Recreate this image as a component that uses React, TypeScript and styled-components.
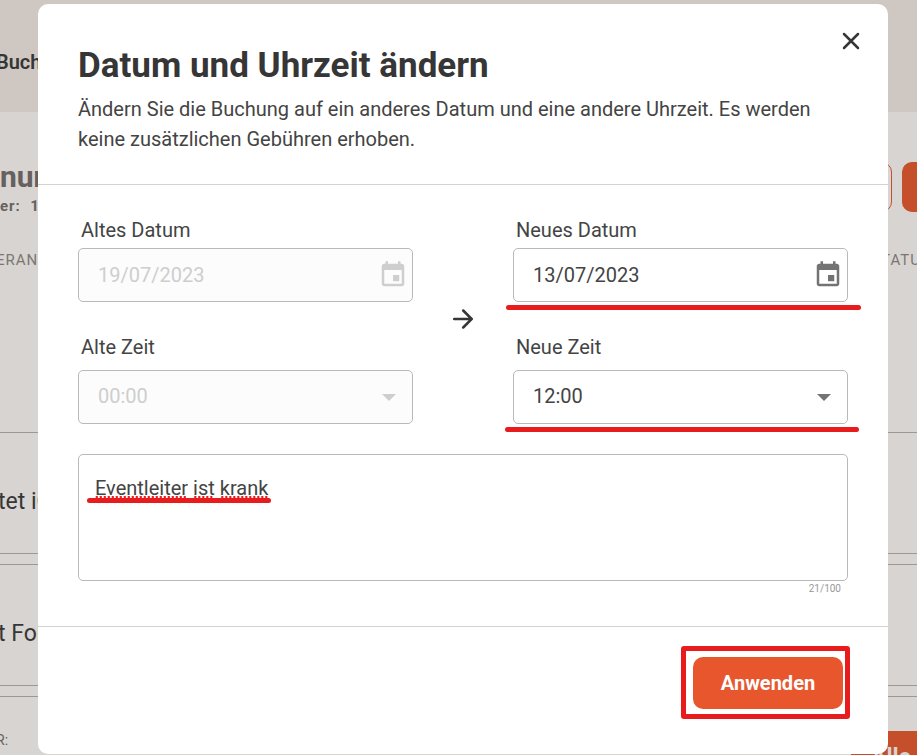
import React, { useState } from 'react';
import styled, { createGlobalStyle, css } from 'styled-components';

const GlobalStyle = createGlobalStyle`
  *, *::before, *::after { box-sizing: border-box; }
  body {
    margin: 0;
    overflow: hidden;
    background: #d8d4d1;
    color: #363636;
    font-family: Roboto, "Liberation Sans", sans-serif;
    font-size: 20px;
  }
  button, input, select, textarea { font: inherit; color: inherit; }
`;

const Page = styled.div`
  height: 100vh;
  overflow: hidden;
`;

const PageHeader = styled.header`
  height: 112px;
  padding-top: 50px;
  background: #cfc7c1;
  font-weight: 600;
  line-height: 24px;
`;

const Clipped = styled.div`
  margin-left: -4px;
`;

const TitleRow = styled.div`
  display: flex;
  justify-content: space-between;
  height: 100px;
  padding-top: 50px;
`;

const PageTitle = styled.h2`
  margin: 0;
  color: #66615e;
  font-size: 30px;
  font-weight: 700;
  line-height: 30px;
`;

const PageSubtitle = styled.p`
  margin: 0;
  padding-top: 2px;
  color: #66615e;
  font-size: 15px;
  font-weight: 700;
  letter-spacing: 1px;
  line-height: 24px;
  white-space: pre;
`;

const PageActions = styled.div`
  display: flex;
  gap: 10px;
`;

const PageButton = styled.button<{ $filled?: boolean }>`
  width: ${(p) => (p.$filled ? 15 : 60)}px;
  height: 50px;
  padding: 0;
  border: 1px solid #c44f2a;
  border-right-width: ${(p) => (p.$filled ? 0 : 1)}px;
  border-radius: ${(p) => (p.$filled ? '10px 0 0 10px' : '10px')};
  background: ${(p) => (p.$filled ? '#c44f2a' : 'transparent')};
`;

const Columns = styled.div`
  display: flex;
  justify-content: space-between;
  height: 220px;
  margin: 0 -4px;
  padding-top: 36px;
  color: #7b7673;
  font-size: 15px;
  letter-spacing: 1px;
  line-height: 24px;
`;

const BookingList = styled.div`
  display: grid;
  gap: 10px;
`;

const Booking = styled.div`
  display: flex;
  justify-content: space-between;
  height: 122px;
  margin-left: -2px;
  padding-top: 56px;
  border: solid #9d9894;
  border-width: 1px 0;
  font-size: 23px;
  line-height: 26px;
`;

const BookingMeta = styled.span`
  margin-top: -26px;
  margin-left: -2px;
  color: #66615e;
  font-size: 14px;
`;

const AllButton = styled.button`
  width: 66px;
  height: 50px;
  margin-top: -22px;
  padding: 4px 6px 0;
  border: 0;
  background: #c44f2a;
  color: #d8d4d1;
  font-weight: 700;
  text-align: right;
`;

const Overlay = styled.div`
  position: fixed;
  inset: 0;
  padding: 4px 29px 1px 38px;
`;

const Dialog = styled.form`
  position: relative;
  border-radius: 10px;
  background: #fff;
`;

const DialogHeader = styled.header`
  padding: 40px 40px 30px;
  border-bottom: 1px solid #d3d3d3;
`;

const DialogTitle = styled.h1`
  margin: 0 0 6px;
  font-size: 35px;
  font-weight: 700;
  line-height: 44px;
`;

const Description = styled.p`
  margin: 0;
  color: #444;
  line-height: 30px;
`;

const CloseButton = styled.button`
  position: absolute;
  top: 21px;
  right: 21px;
  display: grid;
  place-items: center;
  width: 32px;
  height: 32px;
  padding: 0;
  border: 0;
  background: none;
`;

const DialogBody = styled.div`
  padding: 33px 40px 30px;
  border-bottom: 1px solid #d3d3d3;
`;

const Change = styled.div`
  display: grid;
  grid-template-columns: 1fr 100px 1fr;
  align-items: center;
  margin-bottom: 30px;
`;

const ChangeArrow = styled.svg`
  justify-self: center;
  margin-bottom: 4px;
`;

const FieldGroup = styled.div`
  display: grid;
  gap: 33px;
`;

const Field = styled.div<{ $gap: number }>`
  display: grid;
  gap: ${(p) => p.$gap}px;
`;

const Label = styled.label`
  padding-left: 3px;
  color: #444;
  line-height: 24px;
`;

const Control = styled.div`
  position: relative;
`;

const box = css`
  display: block;
  width: 100%;
  border: 1px solid #b9b9b9;
  border-radius: 5px;
  background: #fff;
  color: #444;
  outline: none;
`;

const single = css`
  ${box}
  height: 54px;
  padding: 0 50px 0 19px;
  &:disabled {
    background: #fcfcfc;
    color: #cecece;
    opacity: 1;
  }
`;

const TextInput = styled.input`
  ${single}
`;

const Select = styled.select`
  ${single}
  appearance: none;
  padding-bottom: 2px;
`;

const CalendarButton = styled.button`
  position: absolute;
  top: 12px;
  right: 5px;
  width: 30px;
  height: 30px;
  padding: 0;
  border: 0;
  background: none;
  color: #737373;
  &:disabled { color: #cecece; }
`;

const Caret = styled.svg<{ $muted?: boolean }>`
  position: absolute;
  top: 24px;
  right: 17px;
  fill: ${(p) => (p.$muted ? '#cecece' : '#737373')};
  pointer-events: none;
`;

const Marker = styled.span<{ $shift?: boolean }>`
  position: absolute;
  right: ${(p) => (p.$shift ? -11 : -13)}px;
  bottom: -8px;
  left: ${(p) => (p.$shift ? -8 : -7)}px;
  height: 5px;
  border-radius: 3px;
  background: #e81c1c;
`;

const Reason = styled.textarea`
  ${box}
  height: 127px;
  padding: 18px 16px;
  line-height: 30px;
  resize: none;
`;

const ReasonMarks = styled.svg`
  position: absolute;
  top: 40px;
  left: 8px;
  pointer-events: none;
`;

const Counter = styled.div`
  padding-right: 7px;
  color: #999;
  font-size: 10px;
  line-height: 15px;
  text-align: right;
`;

const DialogFooter = styled.footer`
  display: flex;
  justify-content: flex-end;
  padding: 30px 45px 45px;
`;

const SubmitFrame = styled.div`
  position: relative;
  &::after {
    content: "";
    position: absolute;
    inset: -11px -7px -10px -12px;
    border: 5px solid #e81c1c;
    border-radius: 3px;
    pointer-events: none;
  }
`;

const SubmitButton = styled.button`
  width: 150px;
  height: 52px;
  padding: 0;
  border: 0;
  border-radius: 10px;
  background: #e8562e;
  color: #fff;
  font-weight: 700;
`;

function DateField({ id, label, initial, disabled }: { id: string; label: string; initial: string; disabled?: boolean }) {
  const [value, setValue] = useState(initial);
  return (
    <Field $gap={6}>
      <Label htmlFor={id}>{label}</Label>
      <Control>
        <TextInput id={id} value={value} disabled={disabled} onChange={(e) => setValue(e.target.value)} />
        <CalendarButton type="button" disabled={disabled} aria-label={label}>
          <svg width="30" height="30" viewBox="0 0 24 24" fill="currentColor" display="block">
            <path d="M17 12h-5v5h5v-5zM16 1v2H8V1H6v2H5c-1.11 0-1.99.9-1.99 2L3 19c0 1.1.89 2 2 2h14c1.1 0 2-.9 2-2V5c0-1.1-.9-2-2-2h-1V1h-2zm3 18H5V8h14v11z" />
          </svg>
        </CalendarButton>
        {!disabled && <Marker />}
      </Control>
    </Field>
  );
}

function TimeField({ id, label, value, disabled }: { id: string; label: string; value: string; disabled?: boolean }) {
  return (
    <Field $gap={11}>
      <Label htmlFor={id}>{label}</Label>
      <Control>
        <Select id={id} defaultValue={value} disabled={disabled}>
          <option>{value}</option>
        </Select>
        <Caret width="14" height="7" viewBox="0 0 14 7" $muted={disabled}>
          <path d="M0 0h14L7 7z" />
        </Caret>
        {!disabled && <Marker $shift />}
      </Control>
    </Field>
  );
}

export default function App() {
  const [reason, setReason] = useState('Eventleiter ist krank');
  return (
    <>
      <GlobalStyle />
      <Page>
        <PageHeader>
          <Clipped>Buch</Clipped>
        </PageHeader>
        <TitleRow>
          <div>
            <PageTitle>nun</PageTitle>
            <PageSubtitle>er:  1</PageSubtitle>
          </div>
          <PageActions>
            <PageButton type="button" tabIndex={-1} />
            <PageButton type="button" tabIndex={-1} $filled />
          </PageActions>
        </TitleRow>
        <Columns>
          <span>ERAN</span>
          <span>TATU</span>
        </Columns>
        <BookingList>
          <Booking>tet iO</Booking>
          <Booking>t For</Booking>
          <Booking>
            <BookingMeta>R:</BookingMeta>
            <AllButton type="button" tabIndex={-1}>Alle</AllButton>
          </Booking>
        </BookingList>
      </Page>
      <Overlay>
        <Dialog role="dialog" aria-labelledby="dialog-title" onSubmit={(e) => e.preventDefault()}>
          <DialogHeader>
            <DialogTitle id="dialog-title">Datum und Uhrzeit ändern</DialogTitle>
            <Description>
              Ändern Sie die Buchung auf ein anderes Datum und eine andere Uhrzeit. Es werden keine zusätzlichen
              Gebühren erhoben.
            </Description>
            <CloseButton type="button" aria-label="Schließen">
              <svg width="18" height="18" viewBox="0 0 18 18" stroke="#363636" strokeWidth="2.5" strokeLinecap="round">
                <path d="M2 2l14 14M16 2L2 16" />
              </svg>
            </CloseButton>
          </DialogHeader>
          <DialogBody>
            <Change>
              <FieldGroup>
                <DateField id="old-date" label="Altes Datum" initial="19/07/2023" disabled />
                <TimeField id="old-time" label="Alte Zeit" value="00:00" disabled />
              </FieldGroup>
              <ChangeArrow width="20" height="20" viewBox="0 0 20 20" fill="none" stroke="#363636" strokeWidth="2.5" strokeLinecap="round">
                <path d="M1.2 10h17.3M10.2 1.5l8.5 8.5-8.5 8.5" />
              </ChangeArrow>
              <FieldGroup>
                <DateField id="new-date" label="Neues Datum" initial="13/07/2023" />
                <TimeField id="new-time" label="Neue Zeit" value="12:00" />
              </FieldGroup>
            </Change>
            <Control>
              <Reason
                aria-label="Grund"
                maxLength={100}
                spellCheck={false}
                value={reason}
                onChange={(e) => setReason(e.target.value)}
              />
              <ReasonMarks width="186" height="12" viewBox="0 0 186 12" stroke="#e81c1c" strokeLinecap="round">
                <path d="M10.5 3H102M109 3h20M136 3h46" strokeWidth="2" strokeDasharray="0.6 3.4" />
                <path d="M3.5 6.5h179" strokeWidth="5" />
              </ReasonMarks>
            </Control>
            <Counter>{reason.length}/100</Counter>
          </DialogBody>
          <DialogFooter>
            <SubmitFrame>
              <SubmitButton type="submit">Anwenden</SubmitButton>
            </SubmitFrame>
          </DialogFooter>
        </Dialog>
      </Overlay>
    </>
  );
}
